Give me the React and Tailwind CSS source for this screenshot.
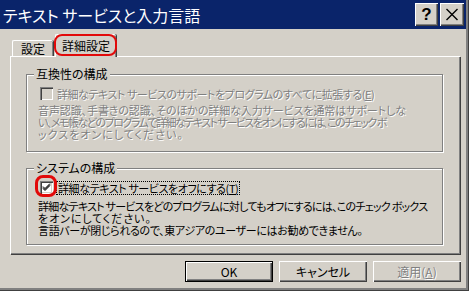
import React from "react";

const FONT = "font-['Noto_Sans_CJK_JP',sans-serif] [font-feature-settings:'palt']";
const RAISED =
  "bg-[#d4d0c8] shadow-[inset_1px_1px_0_#fff,inset_-1px_-1px_0_#404040,inset_-2px_-2px_0_#808080]";
const ETCHED = "border border-[#808080] shadow-[inset_1px_1px_0_#fff,1px_1px_0_#fff]";
const DISABLED = "text-[#808080] [text-shadow:1px_1px_0_#fff]";

function CheckBox({ checked, disabled }) {
  return (
    <span
      className={`relative w-[13px] h-[13px] shrink-0 ${
        disabled ? "bg-[#d4d0c8]" : "bg-white"
      } shadow-[inset_1px_1px_0_#808080,inset_2px_2px_0_#404040,inset_-1px_-1px_0_#fff,inset_-2px_-2px_0_#d4d0c8]`}
    >
      {checked && (
        <svg width="13" height="13" viewBox="0 0 13 13" className="block">
          <path d="M3 5.5 L5 7.5 L10 2.5 M3 6.5 L5 8.5 L10 3.5 M3 7.5 L5 9.5 L10 4.5" stroke="#000" strokeWidth="1" fill="none" />
        </svg>
      )}
    </span>
  );
}

function GroupBox({ title, children, className = "" }) {
  return (
    <div className={`${ETCHED} flex flex-col ${className}`}>
      <span className="-mt-[8px] ml-[7px] px-[2px] w-fit h-[14px] text-[12px] leading-[14px] bg-[#d4d0c8] text-black">
        {title}
      </span>
      {children}
    </div>
  );
}

function Button({ children, def, disabled }) {
  return (
    <div
      className={`w-[88px] h-[21px] flex items-center justify-center text-[12px] ${
        def ? "border border-black" : ""
      } ${RAISED} ${disabled ? DISABLED : "text-black"}`}
    >
      {children}
    </div>
  );
}

export default function App() {
  return (
    <div
      className={`w-[469px] h-[291px] flex flex-col bg-[#d4d0c8] text-[11px] leading-[12px] ${FONT} shadow-[inset_-1px_-1px_0_#404040,inset_-3px_-3px_0_#808080] overflow-hidden`}
    >
      {/* title bar */}
      <div className="h-[29px] mr-[3px] bg-[#0a246a] flex items-center pl-[3px] pr-[2px]">
        <span className="text-white text-[16px] leading-[16px] whitespace-nowrap">
          テキスト サービスと入力言語
        </span>
        <div className="ml-auto flex gap-[2px]">
          <div className={`w-[23px] h-[23px] flex items-center justify-center ${RAISED}`}>
            <span className="font-['Liberation_Sans',sans-serif] font-bold text-[17px] leading-[17px] text-black">?</span>
          </div>
          <div className={`w-[24px] h-[23px] flex items-center justify-center ${RAISED}`}>
            <svg width="14" height="13" viewBox="0 0 14 13">
              <path d="M1.5 1 L12.5 12 M12.5 1 L1.5 12" stroke="#000" strokeWidth="1.4" />
            </svg>
          </div>
        </div>
      </div>

      {/* tabs */}
      <div className="h-[27px] flex items-end pl-[12px] text-[12px]">
        <div className="w-[41px] h-[16px] rounded-t-[2px] border-t border-l border-white shadow-[inset_-1px_0_0_#808080,1px_0_0_#404040] flex items-center justify-center text-black">
          設定
        </div>
        <div className="relative z-10 ml-[2px] -mb-[1px] w-[61px] h-[23px] bg-[#d4d0c8] rounded-t-[2px] border-t border-l border-white shadow-[inset_-1px_0_0_#808080,1px_0_0_#404040] flex items-center justify-center text-black">
          詳細設定
          <span className="absolute -left-[2px] -right-[1px] -top-[1px] bottom-[1px] rounded-[8px] border-2 border-[#e20a0a]" />
        </div>
      </div>

      {/* panel */}
      <div className="ml-[10px] w-[450px] h-[198px] border-t border-l border-white shadow-[inset_-1px_-1px_0_#808080,1px_1px_0_#404040] flex flex-col pl-[15px] pt-[17px]">
        <GroupBox title="互換性の構成" className="w-[417px] h-[78px]">
          <div className="mt-[6px] ml-[13px] flex items-center gap-[4px] h-[13px]">
            <CheckBox disabled />
            <span className={`${DISABLED} whitespace-nowrap tracking-[-0.45px]`}>
              詳細なテキスト サービスのサポートをプログラムのすべてに拡張する(<u>E</u>)
            </span>
          </div>
          <div className={`mt-[4px] ml-[11px] ${DISABLED} whitespace-nowrap flex flex-col`}>
            <span className="tracking-[-0.1px]">
              音声認識、手書きの認識、そのほかの詳細な入力サービスを通常はサポートしな
            </span>
            <span className="tracking-[-1.5px]">
              い、メモ帳などのプログラムで詳細なテキスト サービスをオンにするには、このチェック ボ
            </span>
            <span className="tracking-[1px]">ックスをオンにしてください。</span>
          </div>
        </GroupBox>

        <GroupBox title="システムの構成" className="mt-[16px] w-[417px] h-[77px]">
          <div className="mt-[6px] ml-[13px] flex items-center gap-[3px] h-[13px]">
            <span className="relative flex">
              <CheckBox checked />
              <span className="absolute -left-[5px] -right-[4px] -top-[6px] -bottom-[3px] rounded-[8px] border-[3px] border-[#e20a0a]" />
            </span>
            <span className="border border-dotted border-black px-[1px] h-[14px] leading-[12px] whitespace-nowrap text-black tracking-[-0.4px]">
              詳細なテキスト サービスをオフにする(<u>T</u>)
            </span>
          </div>
          <div className="mt-[6px] ml-[11px] whitespace-nowrap text-black flex flex-col">
            <span className="tracking-[-0.75px]">
              詳細なテキスト サービスをどのプログラムに対してもオフにするには、このチェック ボックス
            </span>
            <span className="tracking-[0.9px]">をオンにしてください。</span>
            <span className="tracking-[-0.35px]">
              言語バーが閉じられるので、東アジアのユーザーにはお勧めできません。
            </span>
          </div>
        </GroupBox>
      </div>

      {/* buttons */}
      <div className="mt-[7px] flex justify-end gap-[6px] pr-[8px]">
        <Button def>OK</Button>
        <Button>キャンセル</Button>
        <Button disabled>
          適用(<u>A</u>)
        </Button>
      </div>
    </div>
  );
}
